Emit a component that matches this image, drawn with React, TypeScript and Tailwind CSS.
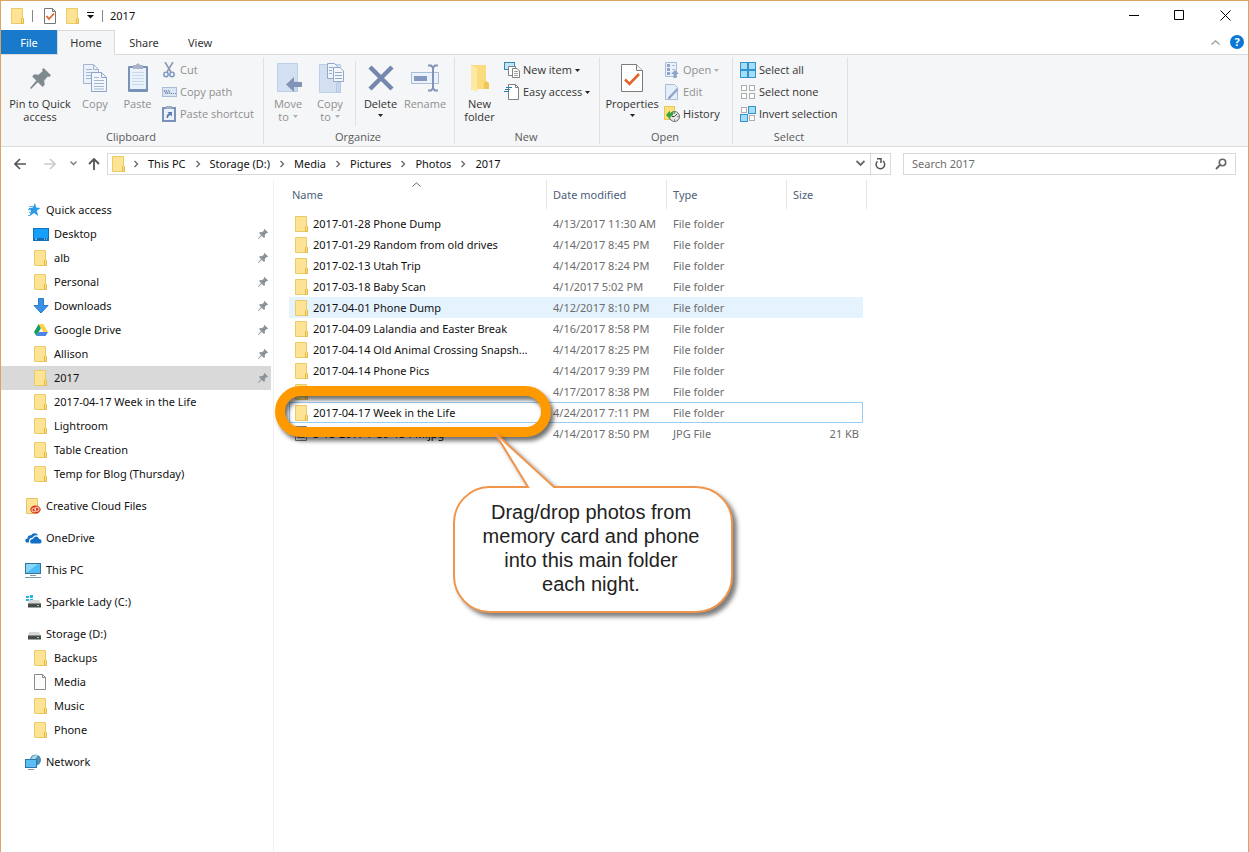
import type { ReactNode } from "react";

// ---------- icons ----------

const Folder = () => (
  <svg width="14" height="16" viewBox="0 0 14 16" className="shrink-0">
    <path d="M.5.5H11.5V9.5L12.5 10.5V15.5H.5Z" fill="#fde494" stroke="#ecca66" />
    <path d="M10.5 15.5V10.5L11.5 9.5L12.5 10.5V15.5Z" fill="#fbdd80" stroke="#e3bb4c" />
  </svg>
);

const Page = () => (
  <svg width="14" height="16" viewBox="0 0 14 16" className="shrink-0">
    <path d="M.5.5H8.5L11.5 3.5V15.5H.5Z" fill="#fbfbfb" stroke="#8a8a8a" />
    <path d="M8.5.5V3.5H11.5" fill="none" stroke="#8a8a8a" />
  </svg>
);

const JpgFile = () => (
  <svg width="14" height="16" viewBox="0 0 14 16" className="shrink-0">
    <path d="M.5.5H11.5V14.5H.5Z" fill="#fff" stroke="#777" />
    <path d="M2 4H10V12H2Z" fill="#a9bccb" />
    <path d="M2 12L5 8L7 10L8 9L10 12Z" fill="#4f6b7c" />
  </svg>
);

const CheckedPage = () => (
  <svg width="12" height="16" viewBox="0 0 12 16" className="shrink-0">
    <path d="M.5.5H8.5L11.5 3.5V15.5H.5Z" fill="#fff" stroke="#777" />
    <path d="M8.5.5V3.5H11.5" fill="none" stroke="#777" />
    <path d="M2.5 8L5 11L10 5.5" fill="none" stroke="#e0622a" strokeWidth="1.8" />
  </svg>
);

const Pin = ({ size = 10, color = "#8b9298" }: { size?: number; color?: string }) => (
  <svg width={size} height={size} viewBox="0 0 20 20" className="shrink-0">
    <path
      d="M13 0L20 7L18.500 8.500L17 8L13.500 12L14 16L12 18L7.500 13.500L1 20L0 19L6 12L2 8L4 6L8 6.500L12 3L11.500 1.500Z"
      fill={color}
    />
  </svg>
);

const Star = () => (
  <svg width="15" height="14" viewBox="0 0 15 14" className="shrink-0">
    <path d="M9 0L10.200 4.500L14.500 5L10.800 7.800L12.200 13L8 10L3.500 13.200L5 8L2.500 5.200L6.800 4.600Z" fill="#2b9be6" />
    <path d="M3 3.500H7M2 6.500H5M3 9.500H5M2 12.500H4" stroke="#5bb4ee" />
  </svg>
);

const DesktopIcon = () => (
  <svg width="16" height="13" viewBox="0 0 16 13" className="shrink-0">
    <rect x=".5" y=".5" width="15" height="12" fill="#14a0fa" stroke="#1273b8" />
    <rect x="1" y="10" width="14" height="2" fill="#0d6db0" />
    <path d="M2 11H4M11 11H12M13 11H14" stroke="#d6efff" />
  </svg>
);

const DownArrow = () => (
  <svg width="16" height="16" viewBox="0 0 16 16" className="shrink-0">
    <path d="M5.500.5H10.500V7.500H15L8 15L1 7.500H5.500Z" fill="#3b92e4" stroke="#2a7bcb" />
  </svg>
);

const Drive = () => (
  <svg width="14" height="12" viewBox="0 0 14 12" className="shrink-0">
    <path d="M4.700 0L7 4L2.500 12L0 8Z" fill="#17a05d" />
    <path d="M4.700 0H9.300L14 8H9.300Z" fill="#ffcf4a" />
    <path d="M4.700 8H14L11.600 12H2.500Z" fill="#4a86e8" />
  </svg>
);

const CreativeCloud = () => (
  <svg width="15" height="16" viewBox="0 0 15 16" className="shrink-0">
    <path d="M.5.5H11.500V15.500H.5Z" fill="#fde494" stroke="#e5c468" />
    <ellipse cx="9.500" cy="11.500" rx="5.200" ry="4" fill="#dc3a1e" />
    <circle cx="7.800" cy="12" r="1.900" fill="none" stroke="#fde0c8" />
    <circle cx="11" cy="11.200" r="2.100" fill="none" stroke="#fde0c8" />
  </svg>
);

const OneDrive = () => (
  <svg width="17" height="11" viewBox="0 0 17 11" className="shrink-0">
    <path d="M4 9.500H1.500C-.5 8.500 0 5.500 2.500 5.500C2.500 2.500 5 2 6 2.500C8-.8 12-.2 13 2.500C9.500 1.500 8 3.500 7.500 4.800C5 4.500 3.500 6.500 4 9.500Z" fill="#0f6fc6" />
    <path d="M6.500 10.500C4.500 10 4.500 6 8 6C9 2.500 13.500 2.500 14 6C17 6 17.300 10 15 10.500Z" fill="#0f6fc6" />
  </svg>
);

const Computer = () => (
  <svg width="17" height="15" viewBox="0 0 17 15" className="shrink-0">
    <rect x=".5" y=".5" width="15" height="10" fill="#4fbcf5" stroke="#3a7193" />
    <path d="M1 10V1H13Z" fill="#86d6fa" />
    <path d="M5 12.500H11M0 14.500H16" stroke="#7f97a5" />
  </svg>
);

const Disk = ({ system = false }: { system?: boolean }) => (
  <svg width="16" height="14" viewBox="0 0 16 14" className="shrink-0">
    {system && <path d="M0 1H3V3H0ZM4 0H7V3H4ZM0 4H3V6H0ZM4 4H7V7H4Z" fill="#25b4e4" />}
    <path d="M3 5H13L15 9H2Z" fill="#d5d7d9" />
    <rect x="2" y="8.500" width="13" height="4" fill="#47494b" />
    <rect x="11" y="10" width="2" height="1" fill="#6cf08b" />
  </svg>
);

const NetworkIcon = () => (
  <svg width="17" height="16" viewBox="0 0 17 16" className="shrink-0">
    <circle cx="10.500" cy="6" r="5.500" fill="#4c8fb3" />
    <path d="M6 5C8 0 12 1 13 1C11 3 12 5 9 6Z" fill="#a9d5e8" />
    <rect x=".5" y="5.500" width="11" height="8" fill="#5cbcf5" stroke="#2c76ab" />
    <path d="M3 15.500H9" stroke="#7f97a5" />
  </svg>
);

const CopyIcon = () => (
  <svg width="26" height="30" viewBox="0 0 26 30">
    <path d="M1.500 1.500H11.500L16.500 6.500V20.500H1.500Z" fill="#eaf1fa" stroke="#a3b6d2" />
    <path d="M11.500 1.500V6.500H16.500" fill="none" stroke="#a3b6d2" />
    <path d="M4 6.500H10M4 9.500H9M4 12.500H9M4 15.500H9" stroke="#a3b6d2" />
    <path d="M9.500 9.500H19.500L24.500 14.500V28.500H9.500Z" fill="#f2f7fd" stroke="#8ea4c6" />
    <path d="M19.500 9.500V14.500H24.500" fill="none" stroke="#8ea4c6" />
    <path d="M12 14.500H17M12 17.500H22M12 20.500H22M12 23.500H22M12 26H22" stroke="#a3b6d2" />
  </svg>
);

const PasteIcon = () => (
  <svg width="22" height="30" viewBox="0 0 22 30">
    <rect x="1" y="3" width="20" height="26" rx="1" fill="#7b92b8" />
    <rect x="3" y="5" width="16" height="21" fill="#e9f1fb" />
    <path d="M5 9.500H17M5 12.500H17M5 15.500H17M5 18.500H17M5 21.500H17" stroke="#cad8eb" />
    <path d="M6 2H9C9 0 13 0 13 2H16V6H6Z" fill="#a9b5c6" />
  </svg>
);

const CutIcon = () => (
  <svg width="12" height="16" viewBox="0 0 12 16">
    <path d="M2 0L8 10M10 0L4 10" stroke="#8b9bb2" strokeWidth="1.600" />
    <circle cx="3" cy="12.500" r="2.200" fill="none" stroke="#7f98c4" strokeWidth="1.500" />
    <circle cx="9" cy="12.500" r="2.200" fill="none" stroke="#7f98c4" strokeWidth="1.500" />
  </svg>
);

const CopyPathIcon = () => (
  <svg width="15" height="10" viewBox="0 0 15 10">
    <rect x=".5" y=".5" width="14" height="9" fill="#dbe6f5" stroke="#a9bbd6" />
    <path d="M2 3L4 7M4 3L6 7M6.500 3L8 7M9 6.500H10M11 6.500H12M13 6.500H14" stroke="#6d84ac" />
  </svg>
);

const PasteShortcutIcon = () => (
  <svg width="14" height="16" viewBox="0 0 14 16">
    <rect x="1" y="2" width="12" height="13" fill="#e9f1fb" stroke="#7b92b8" strokeWidth="2" />
    <path d="M4 0H10V3H4Z" fill="#a0adc2" />
    <path d="M4.500 12C4.500 9 5.500 8 7 7.500L5.500 6H10V10.500L8.500 9C7 9.500 6 10.500 6 12Z" fill="#5d7cab" />
  </svg>
);

const MoveIcon = () => (
  <svg width="28" height="30" viewBox="0 0 28 30">
    <path d="M3.500.5H23.500V28.500H3.500Z" fill="#d3e0f2" stroke="#bccfe8" />
    <path d="M19.500 28.500V20L21.500 18L23.500 20V28.500Z" fill="#c6d6ec" stroke="#b6c9e4" />
    <path d="M12 21.500L20 14V19H28V24H20V29Z" fill="#8194b8" />
  </svg>
);

const CopyToIcon = () => (
  <svg width="28" height="30" viewBox="0 0 28 30">
    <path d="M3.500 1.500H24.500V29.500H3.500Z" fill="#d3e0f2" stroke="#bccfe8" />
    <path d="M20.500 29.500V21L22.500 19L24.500 21V29.500Z" fill="#c6d6ec" stroke="#b6c9e4" />
    <path d="M11.500.5H18.500L21.500 3.500V15.500H11.500Z" fill="#eef4fb" stroke="#93a8c8" />
    <path d="M17.500 4.500H24L27.500 8V18.500H17.500Z" fill="#f4f8fd" stroke="#93a8c8" />
    <path d="M13 4.500H17M13 7.500H16M13 10.500H16M19 9.500H26M19 12.500H26M19 15.500H26" stroke="#93a8c8" />
  </svg>
);

const DeleteIcon = () => (
  <svg width="26" height="26" viewBox="0 0 26 26">
    <path d="M2 2L24 24M24 2L2 24" stroke="#7488ae" strokeWidth="4.500" />
  </svg>
);

const RenameIcon = () => (
  <svg width="28" height="28" viewBox="0 0 28 28">
    <rect x=".5" y="8.500" width="27" height="11" fill="#ebf2fb" stroke="#a9bcd8" />
    <rect x="3" y="12" width="13" height="5" fill="#8499bf" />
    <path d="M17 1.500H20L22 3.500L24 1.500H27M17 26.500H20L22 24.500L24 26.500H27M22 3V25" fill="none" stroke="#8194b8" strokeWidth="2" />
  </svg>
);

const NewFolderIcon = () => (
  <svg width="20" height="28" viewBox="0 0 20 28">
    <path d="M1 1H16V17L19 20V25H8L1 26Z" fill="#fbdc7c" />
    <path d="M1 1L7 4V28L1 25Z" fill="#fde9a6" />
    <path d="M16 17L19 19V25H14V19Z" fill="#f2c654" />
  </svg>
);

const NewItemIcon = () => (
  <svg width="16" height="16" viewBox="0 0 16 16">
    <rect x=".5" y=".5" width="10" height="7" fill="#bfe6fa" stroke="#3d86ad" />
    <path d="M4.500 4.500H11.500V13.500H4.500Z" fill="#fff" stroke="#808080" />
    <path d="M8.500 6.500H13L15.500 9V15.500H8.500Z" fill="#fff" stroke="#808080" />
    <path d="M10 9.500H14M10 11.500H14M10 13.500H14" stroke="#a0a0a0" />
  </svg>
);

const EasyAccessIcon = () => (
  <svg width="16" height="16" viewBox="0 0 16 16">
    <path d="M4.500.5H11.500L14.500 3.500V15.500H4.500Z" fill="#fff" stroke="#808080" />
    <path d="M11.500.5V3.500H14.500" fill="none" stroke="#808080" />
    <path d="M2 3.500H8M1 5.500H6M0 7.500H5" stroke="#2b7fa8" />
  </svg>
);

const PropertiesIcon = () => (
  <svg width="22" height="28" viewBox="0 0 22 28">
    <path d="M.5.5H15.500L21.500 6.500V27.500H.5Z" fill="#fff" stroke="#7d7d7d" />
    <path d="M15.500.5V6.500H21.500" fill="#f0f0f0" stroke="#7d7d7d" />
    <path d="M4 15.500L8.500 20L18 10" fill="none" stroke="#e3642c" strokeWidth="2.600" />
  </svg>
);

const OpenIcon = () => (
  <svg width="14" height="16" viewBox="0 0 14 16">
    <path d="M.5.5H11.500V14.500H.5Z" fill="#eaf1fa" stroke="#a9bbd6" />
    <path d="M2 2H5V5H2ZM2 6H5V9H2ZM2 10H5V13H2Z" fill="#8fa6cb" />
    <path d="M7 3.500H10M7 7.500H10" stroke="#a9bbd6" />
    <path d="M10 8L14 12H11.500V16H8.500V12H6Z" fill="#8da3c9" />
  </svg>
);

const EditIcon = () => (
  <svg width="14" height="16" viewBox="0 0 14 16">
    <path d="M.5.5H9.500L12.500 3.500V15.500H.5Z" fill="#e6eefa" stroke="#a9bbd6" />
    <path d="M12.500 5L5 13" stroke="#92a7cc" strokeWidth="2.500" />
    <path d="M3 15L4 12L6 14Z" fill="#6d84ac" />
  </svg>
);

const HistoryIcon = () => (
  <svg width="16" height="16" viewBox="0 0 16 16">
    <path d="M.5.5H10.500V13.500H.5Z" fill="#fde17f" stroke="#e9c65c" />
    <circle cx="10.500" cy="10.500" r="5" fill="#e4e4e4" stroke="#6c6c6c" />
    <path d="M10.500 10.500L13 8M10.500 10.500H8M10.500 6.500V7.500M10.500 13.500V14.500M13.500 10.500H14.500" stroke="#444" />
    <path d="M2 9L6 4.500V7C8 6.500 9 6 9.500 4.500C10 8 8.500 10.500 6 11V13.500Z" fill="#36a53a" />
  </svg>
);

const SelectIcon = ({ on }: { on: boolean[] }) => (
  <svg width="16" height="16" viewBox="0 0 16 16">
    {on.map((active, i) => {
      const x = (i % 2) * 8;
      const y = Math.floor(i / 2) * 8;
      return active ? (
        <rect key={i} x={x + 0.5} y={y + 0.5} width="7" height="7" fill="#a5dcf8" stroke="#3291cf" />
      ) : (
        <rect key={i} x={x + 1.5} y={y + 1.5} width="5" height="5" fill="#fff" stroke="#adadad" />
      );
    })}
  </svg>
);

const Caret = ({ muted = false }: { muted?: boolean }) => (
  <svg width="5" height="3" viewBox="0 0 5 3" className="shrink-0">
    <path d="M0 0H5L2.500 3Z" fill={muted ? "#b0b0b0" : "#222"} />
  </svg>
);

// ---------- ribbon ----------

function BigButton({ icon, width, muted, children }: { icon: ReactNode; width: string; muted?: boolean; children: ReactNode }) {
  return (
    <button className={`${width} ${muted ? "text-[#8f8f8f]" : "text-[#333]"} flex shrink-0 flex-col items-center leading-[13px]`}>
      <span className="flex h-[38px] items-center">{icon}</span>
      {children}
    </button>
  );
}

function SmallButton({ icon, muted, caret, children }: { icon: ReactNode; muted?: boolean; caret?: boolean; children: ReactNode }) {
  return (
    <button className={`${muted ? "text-[#8f8f8f]" : "text-[#333]"} flex h-[22px] items-center gap-[3px] whitespace-nowrap`}>
      <span className="flex w-4 justify-center">{icon}</span>
      {children}
      {caret && <Caret muted={muted} />}
    </button>
  );
}

function Group({ label, width, children }: { label: string; width: string; children: ReactNode }) {
  return (
    <section className={`${width} flex shrink-0 flex-col border-r border-[#dfe1e3]`}>
      <div className="flex h-[73px]">{children}</div>
      <div className="pr-[2px] text-center leading-[14px] text-[#5a5a5a]">{label}</div>
    </section>
  );
}

function Ribbon() {
  return (
    <div className="flex h-[93px] border-y border-[#dadbdc] bg-[#f5f6f7] py-[2px] font-['Open_Sans','Noto_Sans',sans-serif]">
      <Group label="Clipboard" width="w-[263px]">
        <div className="flex pt-[2px] pl-[3px]">
          <BigButton icon={<Pin size={21} color="#808b90" />} width="w-[72px]">
            <span>Pin to Quick</span>
            <span>access</span>
          </BigButton>
          <BigButton icon={<CopyIcon />} width="w-[38px]" muted>
            Copy
          </BigButton>
          <BigButton icon={<PasteIcon />} width="w-[47px]" muted>
            Paste
          </BigButton>
        </div>
        <div className="pt-[2px]">
          <SmallButton icon={<CutIcon />} muted>Cut</SmallButton>
          <SmallButton icon={<CopyPathIcon />} muted>Copy path</SmallButton>
          <SmallButton icon={<PasteShortcutIcon />} muted>Paste shortcut</SmallButton>
        </div>
      </Group>
      <Group label="Organize" width="w-[191px]">
        <div className="flex gap-[2px] pt-[2px] pl-1">
          <BigButton icon={<MoveIcon />} width="w-10" muted>
            <span>Move</span>
            <span className="flex items-center gap-1">to <Caret muted /></span>
          </BigButton>
          <BigButton icon={<CopyToIcon />} width="w-10" muted>
            <span>Copy</span>
            <span className="flex items-center gap-1">to <Caret muted /></span>
          </BigButton>
        </div>
        <div className="my-1 mr-1 ml-[5px] border-l border-[#dfe1e3]" />
        <div className="flex pt-[2px]">
          <BigButton icon={<DeleteIcon />} width="w-[41px]">
            <span>Delete</span>
            <span className="flex h-[10px] items-center"><Caret /></span>
          </BigButton>
          <BigButton icon={<RenameIcon />} width="w-12" muted>
            Rename
          </BigButton>
        </div>
      </Group>
      <Group label="New" width="w-[145px]">
        <div className="flex pt-[2px]">
          <BigButton icon={<NewFolderIcon />} width="w-[49px]">
            <span>New</span>
            <span>folder</span>
          </BigButton>
        </div>
        <div className="pt-[2px]">
          <SmallButton icon={<NewItemIcon />} caret>New item</SmallButton>
          <SmallButton icon={<EasyAccessIcon />} caret>Easy access</SmallButton>
        </div>
      </Group>
      <Group label="Open" width="w-[133px]">
        <div className="flex pt-[2px]">
          <BigButton icon={<PropertiesIcon />} width="w-16">
            <span>Properties</span>
            <span className="flex h-[10px] items-center"><Caret /></span>
          </BigButton>
        </div>
        <div className="pt-[2px]">
          <SmallButton icon={<OpenIcon />} muted caret>Open</SmallButton>
          <SmallButton icon={<EditIcon />} muted>Edit</SmallButton>
          <SmallButton icon={<HistoryIcon />}>History</SmallButton>
        </div>
      </Group>
      <Group label="Select" width="w-[115px]">
        <div className="pt-[2px] pl-[7px]">
          <SmallButton icon={<SelectIcon on={[true, true, true, true]} />}>Select all</SmallButton>
          <SmallButton icon={<SelectIcon on={[false, false, false, false]} />}>Select none</SmallButton>
          <SmallButton icon={<SelectIcon on={[false, true, true, false]} />}>Invert selection</SmallButton>
        </div>
      </Group>
    </div>
  );
}

// ---------- title, tabs, address ----------

function TitleBar() {
  return (
    <header className="flex h-[29px] items-center">
      <div className="flex flex-1 items-center pl-[10px]">
        <Folder />
        <span className="ml-[7px] h-3 w-px bg-[#888]" />
        <button aria-label="Properties" className="ml-[11px]"><CheckedPage /></button>
        <button aria-label="New folder" className="ml-[10px]"><Folder /></button>
        <button aria-label="Customize toolbar" className="ml-[7px]">
          <svg width="7" height="7" viewBox="0 0 7 7">
            <path d="M0 .5H7" stroke="#111" />
            <path d="M0 3H7L3.500 6.500Z" fill="#111" />
          </svg>
        </button>
        <span className="ml-[8px] h-3 w-px bg-[#888]" />
        <h1 className="ml-[7px]">2017</h1>
      </div>
      <button aria-label="Minimize" className="flex w-[45px] justify-center">
        <svg width="11" height="11" viewBox="0 0 11 11"><path d="M0 5.500H10" stroke="#000" /></svg>
      </button>
      <button aria-label="Maximize" className="flex w-[45px] justify-center">
        <svg width="11" height="11" viewBox="0 0 11 11"><path d="M.5.5H9.500V9.500H.5Z" fill="none" stroke="#000" /></svg>
      </button>
      <button aria-label="Close" className="flex w-[46px] justify-center">
        <svg width="11" height="11" viewBox="0 0 11 11"><path d="M.5.5L10.500 10.500M10.500.5L.5 10.500" stroke="#000" /></svg>
      </button>
    </header>
  );
}

function Tabs() {
  return (
    <nav className="flex h-6 shrink-0 items-stretch text-[#333]">
      <button className="w-14 bg-[#1979ca] pt-[2px] text-white">File</button>
      <button className="relative z-10 -mb-px w-[58px] border-x border-t border-[#dadbdc] bg-[#f5f6f7]">Home</button>
      <button className="w-[58px] pt-[2px]">Share</button>
      <button className="w-[54px] pt-[2px]">View</button>
      <span className="flex-1" />
      <button aria-label="Collapse the ribbon" className="mr-[10px]">
        <svg width="9" height="5" viewBox="0 0 9 5"><path d="M.5 4.500L4.500.8L8.500 4.500" fill="none" stroke="#999" strokeWidth="1.200" /></svg>
      </button>
      <button aria-label="Help" className="mr-1 h-[14px] w-[14px] self-center rounded-full bg-[#0a78d7] font-bold leading-[14px] text-white">
        ?
      </button>
    </nav>
  );
}

const crumbs = ["This PC", "Storage (D:)", "Media", "Pictures", "Photos", "2017"];

const arrowPath = "M12 6H1.500M6 1L1 6L6 11";

function AddressRow() {
  return (
    <div className="flex h-[33px] shrink-0 items-center pr-3">
      <div className="flex w-[106px] shrink-0 items-center pl-[13px]">
        <button aria-label="Back">
          <svg width="12" height="12" viewBox="0 0 12 12"><path d={arrowPath} fill="none" stroke="#555" strokeWidth="1.600" /></svg>
        </button>
        <button aria-label="Forward" className="ml-[18px] rotate-180">
          <svg width="12" height="12" viewBox="0 0 12 12"><path d={arrowPath} fill="none" stroke="#ccc" strokeWidth="1.600" /></svg>
        </button>
        <button aria-label="Recent locations" className="ml-[14px]">
          <svg width="7" height="5" viewBox="0 0 7 5"><path d="M.5.5L3.500 3.500L6.500.5" fill="none" stroke="#777" strokeWidth="1.300" /></svg>
        </button>
        <button aria-label="Up" className="ml-[11px] rotate-90">
          <svg width="12" height="12" viewBox="0 0 12 12"><path d={arrowPath} fill="none" stroke="#555" strokeWidth="1.800" /></svg>
        </button>
      </div>
      <div className="flex h-[22px] flex-1 items-center border border-[#d9d9d9] pl-1">
        <span className="flex w-3"><Folder /></span>
        {crumbs.map((crumb) => (
          <span key={crumb} className="flex items-center">
            <svg width="24" height="8" viewBox="0 0 24 8"><path d="M10.500 1L13.500 4L10.500 7" fill="none" stroke="#666" strokeWidth="1.300" /></svg>
            <a href="#" className="whitespace-nowrap text-[#111]">{crumb}</a>
          </span>
        ))}
        <span className="flex-1" />
        <button aria-label="Previous locations" className="mr-[5px]">
          <svg width="9" height="7" viewBox="0 0 9 7"><path d="M.5 1L4.500 5L8.500 1" fill="none" stroke="#666" strokeWidth="1.800" /></svg>
        </button>
        <button aria-label="Refresh" className="flex h-5 w-5 items-center justify-center border-l border-[#d9d9d9]">
          <svg width="11" height="12" viewBox="0 0 11 12">
            <path d="M2.500 3.200A4.300 4.300 0 1 0 8 3" fill="none" stroke="#555" strokeWidth="1.500" />
            <path d="M2 .8H6V5" fill="none" stroke="#555" strokeWidth="1.500" />
          </svg>
        </button>
      </div>
      <label className="ml-3 flex h-[22px] w-[333px] items-center border border-[#d9d9d9] pr-2 pl-2">
        <input type="text" aria-label="Search 2017" placeholder="Search 2017" className="min-w-0 flex-1 outline-none placeholder:text-[#6d6d6d]" />
        <svg width="12" height="12" viewBox="0 0 12 12">
          <circle cx="7.500" cy="4.500" r="3.200" fill="none" stroke="#666" strokeWidth="1.600" />
          <path d="M5 7L1 11" stroke="#666" strokeWidth="2" />
        </svg>
      </label>
    </div>
  );
}

// ---------- sidebar ----------

type NavEntry = { name: string; icon?: ReactNode; pinned?: boolean; selected?: boolean };

const navSections: { name: string; icon: ReactNode; items?: NavEntry[] }[] = [
  {
    name: "Quick access",
    icon: <Star />,
    items: [
      { name: "Desktop", icon: <DesktopIcon />, pinned: true },
      { name: "alb", pinned: true },
      { name: "Personal", pinned: true },
      { name: "Downloads", icon: <DownArrow />, pinned: true },
      { name: "Google Drive", icon: <Drive />, pinned: true },
      { name: "Allison", pinned: true },
      { name: "2017", pinned: true, selected: true },
      { name: "2017-04-17 Week in the Life" },
      { name: "Lightroom" },
      { name: "Table Creation" },
      { name: "Temp for Blog (Thursday)" },
    ],
  },
  { name: "Creative Cloud Files", icon: <CreativeCloud /> },
  { name: "OneDrive", icon: <OneDrive /> },
  { name: "This PC", icon: <Computer /> },
  { name: "Sparkle Lady (C:)", icon: <Disk system /> },
  {
    name: "Storage (D:)",
    icon: <Disk />,
    items: [{ name: "Backups" }, { name: "Media", icon: <Page /> }, { name: "Music" }, { name: "Phone" }],
  },
  { name: "Network", icon: <NetworkIcon /> },
];

function Sidebar() {
  return (
    <aside className="w-[273px] shrink-0 border-r border-[#f0f0f0] pt-[18px]">
      <ul className="flex flex-col gap-2">
        {navSections.map((section) => (
          <li key={section.name}>
            <a href="#" className="flex h-6 items-center gap-1 pl-6">
              <span className="flex w-[17px] justify-center">{section.icon}</span>
              {section.name}
            </a>
            {section.items && (
              <ul>
                {section.items.map((item) => (
                  <li key={item.name} className={`mr-[2px] ${item.selected ? "bg-[#d9d9d9]" : ""}`}>
                    <a href="#" className="flex h-6 items-center gap-[5px] pr-[3px] pl-8">
                      <span className="flex w-4 justify-center">{item.icon ?? <Folder />}</span>
                      <span className="flex-1">{item.name}</span>
                      {item.pinned && <Pin />}
                    </a>
                  </li>
                ))}
              </ul>
            )}
          </li>
        ))}
      </ul>
    </aside>
  );
}

// ---------- file list ----------

const files = [
  { name: "2017-01-28 Phone Dump", date: "4/13/2017 11:30 AM" },
  { name: "2017-01-29 Random from old drives", date: "4/14/2017 8:45 PM" },
  { name: "2017-02-13 Utah Trip", date: "4/14/2017 8:24 PM" },
  { name: "2017-03-18 Baby Scan", date: "4/1/2017 5:02 PM" },
  { name: "2017-04-01 Phone Dump", date: "4/12/2017 8:10 PM", state: "hover" },
  { name: "2017-04-09 Lalandia and Easter Break", date: "4/16/2017 8:58 PM" },
  { name: "2017-04-14 Old Animal Crossing Snapsh...", date: "4/14/2017 8:25 PM" },
  { name: "2017-04-14 Phone Pics", date: "4/14/2017 9:39 PM" },
  { name: "2017-04-16 Easter", date: "4/17/2017 8:38 PM" },
  { name: "2017-04-17 Week in the Life", date: "4/24/2017 7:11 PM", state: "focus" },
  { name: "3-13-2017 7-39-13 PM.jpg", date: "4/14/2017 8:50 PM", type: "JPG File", size: "21 KB" },
];

const cellStyles: Record<string, string> = {
  hover: "bg-[#e5f3ff] first:pl-[6px]",
  focus: "border-y border-[#99cdf4] first:border-l first:pl-[5px] last:border-r",
};

function FileList() {
  return (
    <table className="ml-[15px] w-[578px] table-fixed border-separate border-spacing-0 text-left text-[#6d6d6d]">
      <colgroup>
        <col className="w-[258px]" />
        <col className="w-[120px]" />
        <col className="w-[120px]" />
        <col className="w-[76px]" />
        <col className="w-[4px]" />
      </colgroup>
      <thead className="text-[#4c607a] [&_th]:h-[29px] [&_th]:border-r [&_th]:border-[#e5e5e5] [&_th]:font-normal">
        <tr>
          <th className="relative pl-[3px]">
            Name
            <svg width="9" height="5" viewBox="0 0 9 5" className="absolute top-[2px] left-[123px]">
              <path d="M.5 4.500L4.500.8L8.500 4.500" fill="none" stroke="#666" />
            </svg>
          </th>
          <th className="pl-[6px]">Date modified</th>
          <th className="pl-[6px]">Type</th>
          <th className="pl-[6px]" colSpan={2}>Size</th>
        </tr>
      </thead>
      <tbody className="[&_td]:h-[21px] [&_td]:whitespace-nowrap">
        <tr aria-hidden="true">
          <td className="!h-1" colSpan={5} />
        </tr>
        {files.map((file) => {
          const cell = file.state ? cellStyles[file.state] : "";
          return (
            <tr key={file.name}>
              <td className={`pl-[6px] text-[#111] ${cell}`}>
                <span className="flex items-center gap-1">
                  {file.type ? <JpgFile /> : <Folder />}
                  {file.name}
                </span>
              </td>
              <td className={`pl-[6px] ${cell}`}>{file.date}</td>
              <td className={`pl-[6px] ${cell}`}>{file.type ?? "File folder"}</td>
              <td className={`pr-1 text-right ${cell}`}>{file.size}</td>
            </tr>
          );
        })}
      </tbody>
    </table>
  );
}

// ---------- annotations over the list ----------

function Annotations() {
  return (
    <>
      <div className="absolute top-[206px] left-[1px] h-[51px] w-[276px] rounded-full border-[10px] border-[#ff9900] drop-shadow-[3px_4px_2px_rgba(0,0,0,0.55)]" />
      <div className="absolute top-[306px] left-[179px] h-[127px] w-[280px]">
        <svg width="280" height="187" viewBox="0 -60 280 187" className="absolute bottom-0 left-0 overflow-visible drop-shadow-[4px_4px_2px_rgba(0,0,0,0.5)]">
          <path
            d="M36 1H75L42 -53L101 1H243A36 36 0 0 1 279 37V90A36 36 0 0 1 243 126H36A36 36 0 0 1 1 90V37A36 36 0 0 1 36 1Z"
            fill="#fff"
            stroke="#f0954c"
            strokeWidth="2"
          />
        </svg>
        <p className="relative w-[248px] pt-[14px] pl-7 text-center font-['Liberation_Sans',Arial,sans-serif] text-[20px] leading-6 text-[#222]">
          Drag/drop photos from memory card and phone into this main folder each night.
        </p>
      </div>
    </>
  );
}

export default function App() {
  return (
    <div className="flex min-h-screen flex-col border-x border-t border-[#dca463] bg-white font-['Noto_Sans','Open_Sans',sans-serif] text-[11px] leading-4 text-[#111]">
      <TitleBar />
      <Tabs />
      <Ribbon />
      <AddressRow />
      <div className="flex flex-1">
        <Sidebar />
        <main className="relative flex-1">
          <FileList />
          <Annotations />
        </main>
      </div>
    </div>
  );
}
